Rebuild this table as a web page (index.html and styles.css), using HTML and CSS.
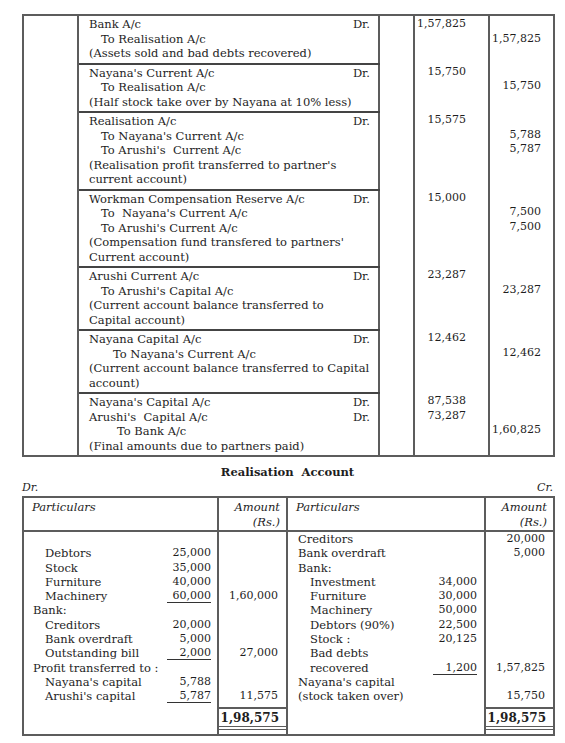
FILE: index.html
```html
<!DOCTYPE html>
<html lang="en">
<head>
    <meta charset="UTF-8">
    <title>Journal entries and Realisation Account</title>
    <link rel="stylesheet" href="styles.css">
</head>
<body>
<div class="sheet">

    <table class="journal">
        <colgroup>
            <col class="c-date">
            <col class="c-part">
            <col class="c-lf">
            <col class="c-dr">
            <col class="c-cr">
        </colgroup>
        <tr>
            <td></td>
            <td class="part">
                <div class="ln"><span>Bank A/c</span><span>Dr.</span></div>
                <div class="ln to">To Realisation A/c</div>
                <div class="ln">(Assets sold and bad debts recovered)</div>
            </td>
            <td></td>
            <td class="dr"><div class="ln">1,57,825</div></td>
            <td class="cr"><div class="ln"></div><div class="ln">1,57,825</div></td>
        </tr>
        <tr>
            <td></td>
            <td class="part">
                <div class="ln"><span>Nayana's Current A/c</span><span>Dr.</span></div>
                <div class="ln to">To Realisation A/c</div>
                <div class="ln">(Half stock take over by Nayana at 10% less)</div>
            </td>
            <td></td>
            <td class="dr"><div class="ln">15,750</div></td>
            <td class="cr"><div class="ln"></div><div class="ln">15,750</div></td>
        </tr>
        <tr>
            <td></td>
            <td class="part">
                <div class="ln"><span>Realisation A/c</span><span>Dr.</span></div>
                <div class="ln to">To Nayana's Current A/c</div>
                <div class="ln to">To Arushi's&nbsp; Current A/c</div>
                <div class="ln">(Realisation profit transferred to partner's</div>
                <div class="ln">current account)</div>
            </td>
            <td></td>
            <td class="dr"><div class="ln">15,575</div></td>
            <td class="cr"><div class="ln"></div><div class="ln">5,788</div><div class="ln">5,787</div></td>
        </tr>
        <tr>
            <td></td>
            <td class="part">
                <div class="ln"><span>Workman Compensation Reserve A/c</span><span>Dr.</span></div>
                <div class="ln to">To&nbsp; Nayana's Current A/c</div>
                <div class="ln to">To Arushi's Current A/c</div>
                <div class="ln">(Compensation fund transfered to partners'</div>
                <div class="ln">Current account)</div>
            </td>
            <td></td>
            <td class="dr"><div class="ln">15,000</div></td>
            <td class="cr"><div class="ln"></div><div class="ln">7,500</div><div class="ln">7,500</div></td>
        </tr>
        <tr>
            <td></td>
            <td class="part">
                <div class="ln"><span>Arushi Current A/c</span><span>Dr.</span></div>
                <div class="ln to">To Arushi's Capital A/c</div>
                <div class="ln">(Current account balance transferred to</div>
                <div class="ln">Capital account)</div>
            </td>
            <td></td>
            <td class="dr"><div class="ln">23,287</div></td>
            <td class="cr"><div class="ln"></div><div class="ln">23,287</div></td>
        </tr>
        <tr>
            <td></td>
            <td class="part">
                <div class="ln"><span>Nayana Capital A/c</span><span>Dr.</span></div>
                <div class="ln to-deep">To Nayana's Current A/c</div>
                <div class="ln">(Current account balance transferred to Capital</div>
                <div class="ln">account)</div>
            </td>
            <td></td>
            <td class="dr"><div class="ln">12,462</div></td>
            <td class="cr"><div class="ln"></div><div class="ln">12,462</div></td>
        </tr>
        <tr>
            <td></td>
            <td class="part last">
                <div class="ln"><span>Nayana's Capital A/c</span><span>Dr.</span></div>
                <div class="ln"><span>Arushi's&nbsp; Capital A/c</span><span>Dr.</span></div>
                <div class="ln to-deeper">To Bank A/c</div>
                <div class="ln">(Final amounts due to partners paid)</div>
            </td>
            <td></td>
            <td class="dr"><div class="ln">87,538</div><div class="ln">73,287</div></td>
            <td class="cr"><div class="ln"></div><div class="ln"></div><div class="ln">1,60,825</div></td>
        </tr>
    </table>

    <h2 class="title">Realisation&nbsp; Account</h2>
    <div class="sides"><span>Dr.</span><span>Cr.</span></div>

    <table class="ledger">
        <colgroup>
            <col class="c-lpart">
            <col class="c-amt">
            <col class="c-rpart">
            <col class="c-amt">
        </colgroup>
        <tr class="head">
            <th class="hpart">Particulars</th>
            <th class="hamt">Amount<br>(Rs.)</th>
            <th class="hpart">Particulars</th>
            <th class="hamt">Amount<br>(Rs.)</th>
        </tr>
        <tr class="body">
            <td class="lpart">
                <div class="ln"></div>
                <div class="ln sub"><span>Debtors</span><span class="inner">25,000</span></div>
                <div class="ln sub"><span>Stock</span><span class="inner">35,000</span></div>
                <div class="ln sub"><span>Furniture</span><span class="inner">40,000</span></div>
                <div class="ln sub"><span>Machinery</span><span class="inner under">60,000</span></div>
                <div class="ln">Bank:</div>
                <div class="ln sub"><span>Creditors</span><span class="inner">20,000</span></div>
                <div class="ln sub"><span>Bank overdraft</span><span class="inner">5,000</span></div>
                <div class="ln sub"><span>Outstanding bill</span><span class="inner under">2,000</span></div>
                <div class="ln">Profit transferred to :</div>
                <div class="ln sub"><span>Nayana's capital</span><span class="inner">5,788</span></div>
                <div class="ln sub"><span>Arushi's capital</span><span class="inner under">5,787</span></div>
            </td>
            <td class="amt">
                <div class="ln"></div><div class="ln"></div><div class="ln"></div><div class="ln"></div>
                <div class="ln">1,60,000</div>
                <div class="ln"></div><div class="ln"></div><div class="ln"></div>
                <div class="ln">27,000</div>
                <div class="ln"></div><div class="ln"></div>
                <div class="ln">11,575</div>
            </td>
            <td class="rpart">
                <div class="ln">Creditors</div>
                <div class="ln">Bank overdraft</div>
                <div class="ln">Bank:</div>
                <div class="ln sub"><span>Investment</span><span class="inner">34,000</span></div>
                <div class="ln sub"><span>Furniture</span><span class="inner">30,000</span></div>
                <div class="ln sub"><span>Machinery</span><span class="inner">50,000</span></div>
                <div class="ln sub"><span>Debtors (90%)</span><span class="inner">22,500</span></div>
                <div class="ln sub"><span>Stock :</span><span class="inner">20,125</span></div>
                <div class="ln sub">Bad debts</div>
                <div class="ln sub"><span>recovered</span><span class="inner under">1,200</span></div>
                <div class="ln">Nayana's capital</div>
                <div class="ln">(stock taken over)</div>
            </td>
            <td class="amt">
                <div class="ln">20,000</div>
                <div class="ln">5,000</div>
                <div class="ln"></div><div class="ln"></div><div class="ln"></div><div class="ln"></div>
                <div class="ln"></div><div class="ln"></div><div class="ln"></div>
                <div class="ln">1,57,825</div>
                <div class="ln"></div>
                <div class="ln">15,750</div>
            </td>
        </tr>
        <tr class="totals">
            <td></td>
            <td class="total"><div class="total-num">1,98,575</div></td>
            <td></td>
            <td class="total"><div class="total-num">1,98,575</div></td>
        </tr>
    </table>

</div>
</body>
</html>
```

FILE: styles.css
```css
body {
    margin: 0;
    padding: 14px 12px 0 22px;
    font-family: "DejaVu Serif", serif;
    font-size: 11.5px;
    color: #1e1e1e;
    background-color: white;
}

.sheet {
    width: 531px;
}

table {
    width: 531px;
    border-collapse: collapse;
    table-layout: fixed;
    border: 2px solid #5c5c5c;
}

td, th {
    padding: 0;
    vertical-align: top;
    border-left: 2px solid #5c5c5c;
    border-right: 2px solid #5c5c5c;
}

.ln {
    height: 14.5px;
    line-height: 14.5px;
    white-space: nowrap;
}

/* journal */
.c-date { width: 55px; }
.c-part { width: 301px; }
.c-lf { width: 35px; }
.c-dr { width: 75px; }
.c-cr { width: 65px; }

.journal .part {
    padding: 1px 8px 2px 10px;
    border-bottom: 2px solid #444;
}
.journal .part.last {
    border-bottom: none;
}
.journal .part .ln {
    display: flex;
    justify-content: space-between;
}
.journal .to { padding-left: 12px; }
.journal .to-deep { padding-left: 24px; }
.journal .to-deeper { padding-left: 28px; }

.journal .dr {
    padding: 1px 22px 0 0;
    text-align: right;
    font-size: 11px;
}
.journal .cr {
    padding: 1px 12px 0 0;
    text-align: right;
    font-size: 11px;
}

/* realisation account */
.title {
    margin: 8px 0 0;
    font-size: 11.5px;
    line-height: 15px;
    font-weight: bold;
    text-align: center;
}
.sides {
    display: flex;
    justify-content: space-between;
    font-style: italic;
    font-size: 11px;
    line-height: 15px;
    margin-bottom: 1px;
}

.c-lpart { width: 195px; }
.c-amt { width: 69px; }
.c-rpart { width: 198px; }

.ledger th {
    font-weight: normal;
    font-style: italic;
    line-height: 14.5px;
    padding: 2px 6px 1px 8px;
    border-bottom: 2px solid #5c5c5c;
}
.ledger .hpart { text-align: left; }
.ledger .hamt { text-align: right; }

.ledger .ln {
    height: 14.3px;
    line-height: 14.3px;
}
.ledger .lpart {
    padding: 0 6px 4px 9px;
}
.ledger .rpart {
    padding: 0 7px 4px 10px;
}
.ledger .sub {
    display: flex;
    justify-content: space-between;
    padding-left: 12px;
}
.ledger .inner {
    width: 44px;
    text-align: right;
    font-size: 11px;
}
.ledger .under {
    height: 13px;
    border-bottom: 1px solid #333;
}
.ledger .amt {
    padding-right: 8px;
    text-align: right;
    font-size: 11px;
}

.ledger .total {
    border-top: 2px solid #5c5c5c;
    padding-bottom: 4px;
}
.total-num {
    padding: 2px 7px 1px 0;
    text-align: right;
    font-size: 12px;
    font-weight: bold;
    line-height: 14.5px;
    border-bottom: 4px double #5c5c5c;
}
```
